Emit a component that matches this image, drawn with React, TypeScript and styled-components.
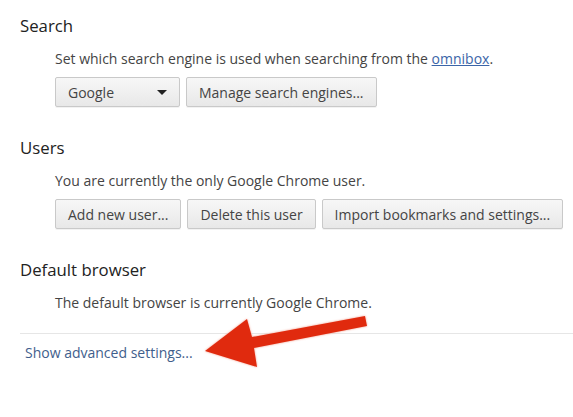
import React from "react";
import styled, { createGlobalStyle } from "styled-components";

const Global = createGlobalStyle`
  html, body { margin: 0; padding: 0; background: #fff; }
  body { font-family: "Open Sans", "Noto Sans", sans-serif; color: #333; }
`;

const Page = styled.div`
  position: relative;
  width: 573px;
  height: 417px;
  overflow: hidden;
  padding-top: 14px;
  box-sizing: border-box;
`;

const Section = styled.section<{ $last?: boolean }>`
  display: flex;
  flex-direction: column;
  padding-left: 20px;
  margin-bottom: ${(p) => (p.$last ? 20 : 29)}px;
`;

const Heading = styled.h3`
  margin: 0;
  font-size: 16.8px;
  font-weight: 400;
  line-height: 24px;
  color: #222;
`;

const Body = styled.div`
  display: flex;
  flex-direction: column;
  gap: 8px;
  padding-left: 35px;
  margin-top: 11px;
`;

const Text = styled.p`
  margin: 0;
  font-size: 14px;
  line-height: 20px;
  color: #444;
`;

const Link = styled.a`
  color: #3b65a8;
  text-decoration: underline;
`;

const Row = styled.div`
  display: flex;
  gap: 6px;
`;

const Button = styled.button<{ $w?: number }>`
  display: flex;
  align-items: center;
  justify-content: ${(p) => (p.$w ? "space-between" : "center")};
  height: 30px;
  ${(p) => (p.$w ? `width: ${p.$w}px;` : "")}
  padding: 0 12px;
  box-sizing: border-box;
  border: 1px solid #c9c9c9;
  border-radius: 2px;
  background: linear-gradient(#f7f7f7, #e8e8e8);
  box-shadow: 0 1px 0 rgba(0, 0, 0, 0.05);
  font-family: inherit;
  font-size: 14px;
  color: #444;
`;

const Caret = styled.span`
  width: 0;
  height: 0;
  border-left: 5px solid transparent;
  border-right: 5px solid transparent;
  border-top: 5px solid #222;
`;

const Divider = styled.hr`
  margin: 0 0 0 20px;
  border: 0;
  border-top: 1px solid #e6e6e6;
`;

const Advanced = styled.a`
  display: block;
  margin: 9px 0 0 25px;
  font-size: 14px;
  line-height: 20px;
  color: #3f5e8c;
`;

const Arrow = styled.svg`
  position: absolute;
  left: 0;
  top: 0;
  pointer-events: none;
`;

export default function App() {
  return (
    <Page>
      <Global />
      <Section>
        <Heading>Search</Heading>
        <Body>
          <Text>
            Set which search engine is used when searching from the{" "}
            <Link>omnibox</Link>.
          </Text>
          <Row>
            <Button $w={125}>
              Google <Caret />
            </Button>
            <Button>Manage search engines...</Button>
          </Row>
        </Body>
      </Section>
      <Section>
        <Heading>Users</Heading>
        <Body>
          <Text>You are currently the only Google Chrome user.</Text>
          <Row>
            <Button>Add new user...</Button>
            <Button>Delete this user</Button>
            <Button>Import bookmarks and settings...</Button>
          </Row>
        </Body>
      </Section>
      <Section $last>
        <Heading>Default browser</Heading>
        <Body>
          <Text>The default browser is currently Google Chrome.</Text>
        </Body>
      </Section>
      <Divider />
      <Advanced>Show advanced settings...</Advanced>
      <Arrow width="573" height="417" viewBox="0 0 573 417">
        <defs>
          <filter id="glow" x="-10%" y="-10%" width="120%" height="120%">
            <feGaussianBlur stdDeviation="1" />
          </filter>
        </defs>
        <polygon
          points="205,351 247,319 252,337 365,316 367,326 254,348 257,367"
          fill="#f3a090"
          filter="url(#glow)"
        />
        <polygon
          points="205,351 247,319 252,337 365,316 367,326 254,348 257,367"
          fill="#e02a0e"
        />
      </Arrow>
    </Page>
  );
}
